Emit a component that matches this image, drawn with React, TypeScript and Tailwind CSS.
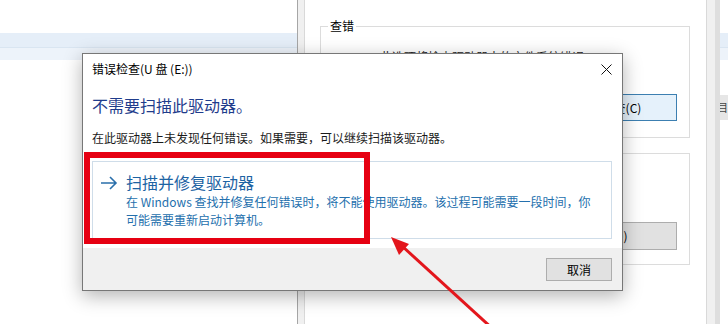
import React from 'react';

const font = { fontFamily: '"Noto Sans CJK SC", "Noto Sans", sans-serif' };

// background explorer window (full width, behind everything)
const BackWindow: React.FC = () => (
  <div className="absolute inset-0 bg-white">
    <div className="h-[33px]" />
    <div className="h-[14px] bg-[#e5eef8]" />
    <div className="h-[13px] bg-[#edf3fa] border-t border-[#d9e5f1]" />
    <div className="h-[35px]" />
    <div className="flex justify-end">
      <div className="w-[12px] h-[25px] bg-[#e6e6e6] flex items-center pl-[1px] text-[11px] text-[#444] overflow-hidden whitespace-nowrap">
        目,
      </div>
    </div>
  </div>
);

interface GroupProps {
  label?: string;
  text?: string;
  button: string;
  blue?: boolean;
  className?: string;
}

const GroupBox: React.FC<GroupProps> = ({ label, text, button, blue, className }) => (
  <div className={`relative ml-[15px] w-[370px] h-[112px] border border-[#dcdcdc] ${className ?? ''}`}>
    {label && (
      <span className="absolute -top-[9px] left-[7px] bg-white px-[2px] text-[12px] leading-[16px] text-black">{label}</span>
    )}
    <div className="flex flex-col h-full">
      <div className="h-[24px]" />
      {text && <div className="pl-[59px] text-[12px] leading-[12px] text-[#222] whitespace-nowrap">{text}</div>}
      <div className="flex-1" />
      <div className="flex justify-end pr-[12px] pb-[16px]">
        {blue ? (
          <div className="w-[111px] h-[27px] bg-[#e5f1fb] border border-[#3c7fb1] flex items-center justify-center text-[12px] text-black">
            {button}
          </div>
        ) : (
          <div className="w-[140px] h-[28px] mb-[-2px] bg-[#e1e1e1] border border-[#adadad] flex items-center justify-center text-[12px] text-black">
            {button}
          </div>
        )}
      </div>
    </div>
  </div>
);

// the drive properties window behind the dialog
const PropertiesWindow: React.FC = () => (
  <div className="absolute left-[297px] top-0 w-[423px] h-full bg-[#f0f0f0] border-l border-r-[5px] border-l-[#a6a6a6] border-r-[#dedede] flex">
    <div className="ml-[6px] w-[403px] h-[330px] -mt-[1px] bg-white border border-[#d9d9d9] relative">
      <div className="absolute -top-[2px] left-[48px] w-[51px] h-[3px] bg-white" />
      <div className="h-[26px]" />
      <GroupBox label="查错" text="此选项将检查驱动器中的文件系统错误。" button="检查(C)" blue />
      <GroupBox button="优化(O)" className="mt-[15px]" />
    </div>
  </div>
);

const Dialog: React.FC = () => (
  <div className="absolute left-[82px] top-[53px] w-[541px] h-[238px] bg-white border border-[#777] shadow-[0_5px_18px_rgba(0,0,0,0.3)] flex flex-col">
    <div className="h-[30px] flex items-center justify-between pl-[9px] pr-[9px]">
      <span className="text-[12px] leading-[16px] text-black">错误检查(U 盘 (E:))</span>
      <svg width="11" height="11" viewBox="0 0 11 11" className="mr-[1px]">
        <path d="M0.5 0.5 L10.5 10.5 M10.5 0.5 L0.5 10.5" stroke="#111" strokeWidth="1" fill="none" />
      </svg>
    </div>
    <div className="pl-[9px] pr-[10px] flex flex-col">
      <div className="mt-[10px] text-[16px] leading-[22px] text-[#1f3c8c]">不需要扫描此驱动器。</div>
      <div className="mt-[13px] text-[12px] leading-[18px] text-[#1a1a1a]">
        在此驱动器上未发现任何错误。如果需要，可以继续扫描该驱动器。
      </div>
      <div className="mt-[14px] mb-[9px] border border-[#cfdde9] pt-[10px] pb-[9px] pl-[7px] flex">
        <svg width="18" height="21" viewBox="0 0 18 21" className="shrink-0">
          <path d="M1 11 H16 M10 5 L16 11 L10 17" stroke="#2a6fab" strokeWidth="1.6" fill="none" />
        </svg>
        <div className="ml-[8px] flex flex-col">
          <div className="text-[16px] leading-[21px] text-[#1d63a3]">扫描并修复驱动器</div>
          <div className="text-[12px] leading-[18px] text-[#2470ad] whitespace-nowrap">
            在 Windows 查找并修复任何错误时，将不能使用驱动器。该过程可能需要一段时间，你
          </div>
          <div className="text-[12px] leading-[18px] text-[#2470ad] whitespace-nowrap">可能需要重新启动计算机。</div>
        </div>
      </div>
    </div>
    <div className="flex-1 bg-[#f0f0f0] flex justify-end items-start pt-[10px] pr-[10px]">
      <div className="w-[66px] h-[23px] bg-[#e1e1e1] border border-[#adadad] flex items-center justify-center text-[12px] text-black">
        取消
      </div>
    </div>
  </div>
);

// red annotation: box around the command link and an arrow pointing at it
const Annotation: React.FC = () => (
  <>
    <div className="absolute left-[84px] top-[152px] w-[286px] h-[92px] border-[6px] border-[#e60012]" />
    <svg className="absolute inset-0 pointer-events-none" width="728" height="324" viewBox="0 0 728 324">
      <line x1="402" y1="246" x2="494" y2="330" stroke="#e3161c" strokeWidth="3" />
      <polygon points="391,237 409,244 399,255" fill="#e3161c" />
    </svg>
  </>
);

export default function App() {
  return (
    <div className="relative w-[728px] h-[324px] overflow-hidden bg-white" style={font}>
      <BackWindow />
      <PropertiesWindow />
      <Dialog />
      <Annotation />
    </div>
  );
}
